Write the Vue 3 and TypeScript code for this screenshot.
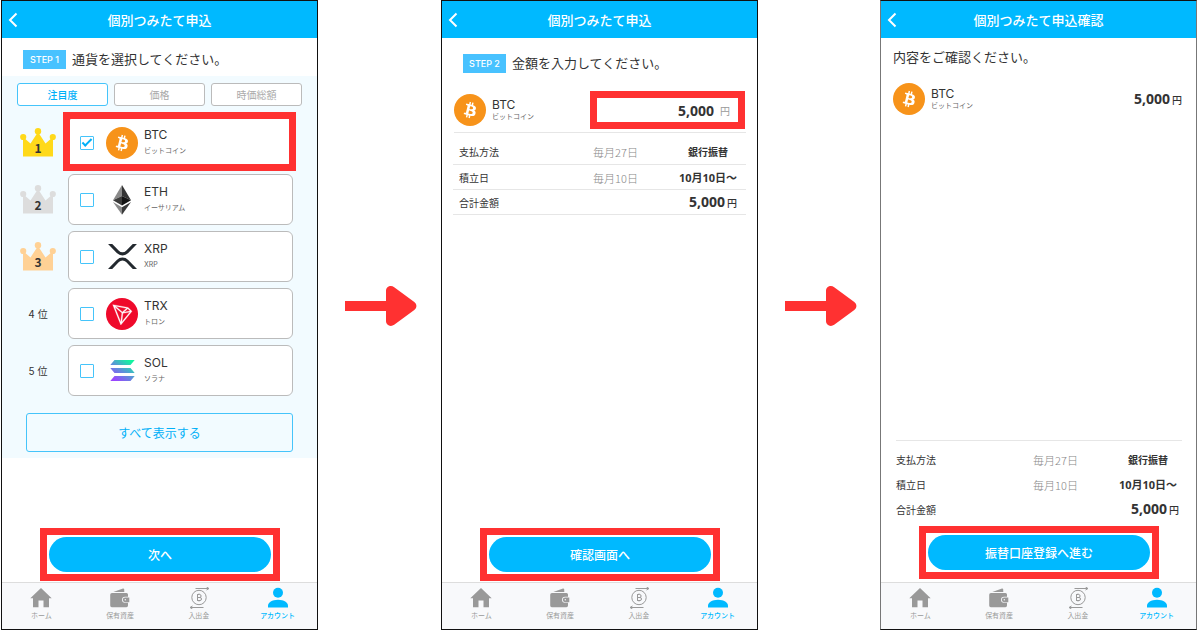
<script setup lang="ts">
import { ref } from 'vue'

interface Coin {
  id: string
  name: string
  rank: number
}

const coins: Coin[] = [
  { id: 'BTC', name: 'ビットコイン', rank: 1 },
  { id: 'ETH', name: 'イーサリアム', rank: 2 },
  { id: 'XRP', name: 'XRP', rank: 3 },
  { id: 'TRX', name: 'トロン', rank: 4 },
  { id: 'SOL', name: 'ソラナ', rank: 5 },
]

const tabs: string[] = ['注目度', '価格', '時価総額']
const activeTab = ref<string>('注目度')
const selected = ref<string[]>(['BTC'])
const amount = ref<string>('5,000')

type Step = 'select' | 'amount' | 'confirm'
interface Screen {
  step: Step
  title: string
  action: string
}

const screens: Screen[] = [
  { step: 'select', title: '個別つみたて申込', action: '次へ' },
  { step: 'amount', title: '個別つみたて申込', action: '確認画面へ' },
  { step: 'confirm', title: '個別つみたて申込確認', action: '振替口座登録へ進む' },
]

const navItems: { key: string; label: string }[] = [
  { key: 'home', label: 'ホーム' },
  { key: 'wallet', label: '保有資産' },
  { key: 'transfer', label: '入出金' },
  { key: 'account', label: 'アカウント' },
]

const bitcoinMark =
  'M23.189 14.02c.314-2.096-1.283-3.223-3.465-3.975l.708-2.84-1.728-.43-.69 2.765c-.454-.114-.92-.22-1.385-.326l.695-2.783L15.596 6l-.708 2.839c-.376-.086-.746-.17-1.104-.26l.002-.009-2.384-.595-.46 1.846s1.283.294 1.256.312c.7.175.826.638.805 1.006l-.806 3.235c.048.012.11.03.18.057l-.183-.045-1.13 4.532c-.086.212-.303.531-.793.41.018.025-1.256-.313-1.256-.313l-.858 1.978 2.25.561c.418.105.828.215 1.231.318l-.715 2.872 1.727.43.708-2.84c.472.127.93.245 1.378.357l-.706 2.828 1.728.43.715-2.866c2.948.558 5.164.333 6.097-2.333.752-2.146-.037-3.385-1.588-4.192 1.13-.26 1.98-1.003 2.207-2.538zm-3.95 5.538c-.533 2.147-4.148.986-5.32.695l.95-3.805c1.172.293 4.929.872 4.37 3.11zm.535-5.569c-.487 1.953-3.495.96-4.47.717l.86-3.45c.975.243 4.118.696 3.61 2.733z'
</script>

<template>
  <main class="flow">
    <template v-for="(screen, index) in screens" :key="screen.step">
      <div v-if="index > 0" class="arrow">
        <svg width="72" height="40" viewBox="0 0 72 40" aria-hidden="true">
          <path
            d="M0 15H41V5C41 .8 45.600 -1.300 49.200 1.200L69.300 16C72.100 18.200 72.100 21.800 69.300 24L49.200 38.800C45.600 41.300 41 39.200 41 35V25H0Z"
            fill="#ff3131"
          />
        </svg>
      </div>

      <section class="phone" :class="screen.step">
        <header class="bar">
          <button type="button" class="back" aria-label="戻る">
            <svg width="10" height="16" viewBox="0 0 10 16" aria-hidden="true">
              <path d="M8.500 1.500L2 8l6.500 6.500" fill="none" stroke="#fff" stroke-width="2" />
            </svg>
          </button>
          <h1>{{ screen.title }}</h1>
        </header>

        <template v-if="screen.step === 'select'">
          <p class="lead"><span class="badge">STEP 1</span>通貨を選択してください。</p>
          <div class="panel">
            <div class="tabs">
              <button
                v-for="tab in tabs"
                :key="tab"
                type="button"
                :class="{ active: tab === activeTab }"
                @click="activeTab = tab"
              >
                {{ tab }}
              </button>
            </div>
            <ul class="coins">
              <li v-for="coin in coins" :key="coin.id">
                <span v-if="coin.rank <= 3" class="crown" :class="'rank' + coin.rank">
                  <svg width="36" height="29" viewBox="0 0 36 29" aria-hidden="true">
                    <path d="M3 28.500V9L10.500 15.500 18 4l7.500 11.500L33 9V28.500Z" />
                    <circle cx="18" cy="3.300" r="3.200" />
                    <circle cx="3.200" cy="9" r="3.100" />
                    <circle cx="32.800" cy="9" r="3.100" />
                  </svg>
                  <b>{{ coin.rank }}</b>
                </span>
                <span v-else class="place">{{ coin.rank }} 位</span>
                <label class="card" :class="{ marked: coin.id === 'BTC' }">
                  <input v-model="selected" type="checkbox" :value="coin.id" />
                  <span class="logo">
                    <svg v-if="coin.id === 'BTC'" width="32" height="32" viewBox="0 0 32 32" aria-hidden="true">
                      <circle cx="16" cy="16" r="16" fill="#f7931a" />
                      <path :d="bitcoinMark" fill="#fff" transform="translate(2.900 2.900) scale(.82)" />
                    </svg>
                    <svg v-else-if="coin.id === 'ETH'" width="18" height="30" viewBox="0 0 18 30" aria-hidden="true">
                      <path d="M9 0L0 15.200 9 11.100Z" fill="#8a8a8a" />
                      <path d="M9 0V11.100L18 15.200Z" fill="#343434" />
                      <path d="M0 15.200L9 20.600V11.100Z" fill="#3c3c3b" />
                      <path d="M18 15.200L9 20.600V11.100Z" fill="#141414" />
                      <path d="M0 17L9 22.300V29.800Z" fill="#8a8a8a" />
                      <path d="M18 17L9 22.300V29.800Z" fill="#3a3a3a" />
                    </svg>
                    <svg
                      v-else-if="coin.id === 'XRP'"
                      width="29"
                      height="25"
                      viewBox="6 8 20 16.600"
                      preserveAspectRatio="none"
                      aria-hidden="true"
                    >
                      <path
                        fill="#23292f"
                        d="M23.070 8h2.890l-6.015 5.957a5.621 5.621 0 0 1-7.890 0L6.035 8H8.930l4.570 4.523a3.556 3.556 0 0 0 4.996 0L23.070 8zM8.895 24.563H6l6.055-5.993a5.621 5.621 0 0 1 7.890 0L26 24.563h-2.895L18.500 20a3.556 3.556 0 0 0-4.996 0l-4.610 4.563z"
                      />
                    </svg>
                    <svg v-else-if="coin.id === 'TRX'" width="32" height="32" viewBox="0 0 32 32" aria-hidden="true">
                      <circle cx="16" cy="16" r="16" fill="#ef0a2b" />
                      <path
                        fill="#fff"
                        stroke="#fff"
                        stroke-width=".3"
                        transform="translate(-1.200 -1) scale(1.060)"
                        d="M21.932 9.913L7.500 7.257l7.595 19.112 10.583-12.894-3.746-3.562zm-.232 1.170l2.208 2.099-6.038 1.093 3.830-3.192zm-5.142 2.973l-6.364-5.278 10.402 1.914-4.038 3.364zm-.453.934l-1.038 8.580L9.472 9.487l6.633 5.502zm.960.455l6.687-1.210-7.670 9.343.983-8.133z"
                      />
                    </svg>
                    <svg v-else width="25" height="21" viewBox="0 0 25 21" aria-hidden="true">
                      <defs>
                        <linearGradient id="solana" gradientUnits="userSpaceOnUse" x1="20" y1="1" x2="6" y2="21">
                          <stop offset="0" stop-color="#12f5a0" />
                          <stop offset=".5" stop-color="#5b93d8" />
                          <stop offset="1" stop-color="#9a45ff" />
                        </linearGradient>
                      </defs>
                      <path
                        fill="url(#solana)"
                        d="M4.500 0H24.700L20.500 5H.300ZM.300 8H20.500L24.700 13H4.500ZM4.500 16H24.700L20.500 21H.300Z"
                      />
                    </svg>
                  </span>
                  <span class="coin-name"><span>{{ coin.id }}</span><small>{{ coin.name }}</small></span>
                </label>
              </li>
            </ul>
            <button type="button" class="show-all">すべて表示する</button>
          </div>
        </template>

        <template v-else>
          <p v-if="screen.step === 'amount'" class="lead"><span class="badge">STEP 2</span>金額を入力してください。</p>
          <p v-else class="lead">内容をご確認ください。</p>
          <div class="holding">
            <svg width="32" height="32" viewBox="0 0 32 32" aria-hidden="true">
              <circle cx="16" cy="16" r="16" fill="#f7931a" />
              <path :d="bitcoinMark" fill="#fff" transform="translate(2.900 2.900) scale(.82)" />
            </svg>
            <span class="coin-name"><span>BTC</span><small>ビットコイン</small></span>
            <label v-if="screen.step === 'amount'" class="entry">
              <input v-model="amount" type="text" inputmode="numeric" aria-label="積立金額" />
              <span>円</span>
            </label>
            <span v-else class="money"><b>{{ amount }}</b>円</span>
          </div>
          <table class="summary">
            <tbody>
              <tr>
                <th scope="row">支払方法</th>
                <td class="when">毎月27日</td>
                <td class="value">銀行振替</td>
              </tr>
              <tr>
                <th scope="row">積立日</th>
                <td class="when">毎月10日</td>
                <td class="value date">10月10日～</td>
              </tr>
              <tr>
                <th scope="row">合計金額</th>
                <td class="total" colspan="2"><span class="money"><b>{{ amount }}</b>円</span></td>
              </tr>
            </tbody>
          </table>
        </template>

        <div class="action">
          <button type="button">{{ screen.action }}</button>
        </div>

        <nav class="nav">
          <a v-for="item in navItems" :key="item.key" href="#" :class="{ current: item.key === 'account' }">
            <svg width="22" height="22" viewBox="0 0 22 22" aria-hidden="true">
              <path
                v-if="item.key === 'home'"
                fill="currentColor"
                d="M11 1L21.700 11.300H19V20.300H13.500V13.500H8.500V20.300H3V11.300H.300Z"
              />
              <g v-else-if="item.key === 'wallet'" fill="currentColor">
                <path d="M4.300 4.900L14 1.600Q15 1.400 15.200 2.400L15.300 4.900Z" />
                <path
                  d="M3 6H17.500Q19 6 19 7.500V9.800H16A3 3 0 0 0 16 15.800H19V18.600Q19 20.300 17.400 20.300H2.800Q1.200 20.300 1.200 18.600V7.800Q1.200 6 3 6Z"
                />
                <path
                  fill-rule="evenodd"
                  d="M16.200 10.400H20.300V15.200H16.200A2.400 2.400 0 0 1 16.200 10.400ZM16.300 12.100A.7 .7 0 1 0 16.300 13.500A.7 .7 0 1 0 16.300 12.100Z"
                />
              </g>
              <g v-else-if="item.key === 'transfer'" fill="none" stroke="currentColor" stroke-width="1">
                <circle cx="11" cy="10.500" r="7.200" />
                <path d="M7.500 1.500H20.500M18.500 0L21 1.500 18.500 3M15.500 20.500H2.500M4.500 19L2 20.500 4.500 22" />
                <path d="M9.100 7.500H11.600A1.500 1.500 0 0 1 11.600 10.500H9.100M9.100 10.500H12A1.500 1.500 0 0 1 12 13.500H9.100M9.500 7.500V13.500M11 6.500V7.500M11 13.500V14.500" />
              </g>
              <g v-else fill="currentColor">
                <circle cx="11" cy="5.700" r="5" />
                <path d="M1 20.500V18.500C1 15.500 5 12.700 11 12.700S21 15.500 21 18.500V20.500Z" />
              </g>
            </svg>
            <span>{{ item.label }}</span>
          </a>
        </nav>
      </section>
    </template>
  </main>
</template>

<style>
body {
  margin: 0;
  background: #fff;
}
</style>

<style scoped>
.flow {
  box-sizing: border-box;
  display: grid;
  grid-template-columns: 317fr 123fr 317fr 122fr 317fr;
  min-height: 100vh;
  padding: 0 3px 0 1px;
  color: #333;
  font-family: Inter, 'Noto Sans CJK JP', sans-serif;
  font-size: 13px;
}
.flow *,
.flow *::before,
.flow *::after {
  box-sizing: border-box;
}
button,
input {
  margin: 0;
  padding: 0;
  border: 0;
  background: none;
  color: inherit;
  font: inherit;
}
button {
  cursor: pointer;
}
.arrow {
  display: flex;
  align-items: center;
  justify-content: center;
  padding: 0 0 18px 3px;
}
.phone {
  display: flex;
  flex-direction: column;
  min-width: 0;
  border: 1px solid #111;
}
.phone.confirm {
  border-left-color: #777;
  border-right-color: #777;
}
.bar {
  display: grid;
  grid-template-columns: 24px 1fr 24px;
  align-items: center;
  height: 37px;
  background: #00b9ff;
  color: #fff;
}
.bar h1 {
  margin: 0;
  font-size: 13px;
  font-weight: 500;
  line-height: 20px;
  text-align: center;
}
.back {
  display: flex;
  padding-left: 6px;
}
.lead {
  display: flex;
  align-items: center;
  gap: 6px;
  margin: 0;
  padding: 12px 0 7px 21px;
  line-height: 19px;
}
.amount .lead {
  padding-top: 16px;
}
.confirm .lead {
  padding: 10px 0 7px 12px;
}
.badge {
  width: 43px;
  background: #48c2ff;
  color: #fff;
  font-size: 9px;
  font-weight: 500;
  text-align: center;
}
.panel {
  padding: 7px 24px 6px;
  background: #f2fbff;
}
.tabs {
  display: grid;
  grid-template-columns: repeat(3, 1fr);
  gap: 6px;
  margin: 0 -9px;
}
.tabs button {
  height: 23px;
  border: 1px solid #bbb;
  border-radius: 3px;
  background: #fff;
  color: #aaa;
  font-size: 10px;
}
.tabs .active {
  border-color: #45c4fa;
  color: #00b0f8;
  font-weight: 500;
}
.coins {
  display: grid;
  gap: 6px;
  margin: 11px 0 17px;
  padding: 0;
  list-style: none;
}
.coins li {
  display: grid;
  grid-template-columns: 24px 1fr;
  column-gap: 18px;
  align-items: center;
}
.crown,
.place {
  display: grid;
  place-items: center;
  justify-content: center;
}
.place {
  font-size: 10px;
  white-space: nowrap;
}
.crown > * {
  grid-area: 1 / 1;
}
.crown b {
  padding-top: 10px;
  font-family: 'Noto Sans CJK JP', sans-serif;
  font-size: 12px;
  line-height: 14px;
}
.rank1 {
  fill: #ffd91a;
}
.rank2 {
  fill: #ddd;
}
.rank3 {
  fill: #ffd195;
}
.card {
  position: relative;
  display: flex;
  align-items: center;
  height: 51px;
  padding-left: 11px;
  border: 1px solid #bbb;
  border-radius: 6px;
  background: #fff;
}
.card.marked::after {
  position: absolute;
  inset: -6px -4px -4px -6px;
  border: 7px solid #ff3131;
  content: '';
  pointer-events: none;
}
.card input {
  width: 14px;
  height: 14px;
  border: 1px solid #45c4fa;
  border-radius: 1px;
  background: #fff;
  appearance: none;
}
.card input:checked {
  display: grid;
  place-items: center;
}
.card input:checked::before {
  width: 10px;
  height: 5px;
  margin-bottom: 3px;
  border: solid #00b0f8;
  border-width: 0 0 2px 2px;
  transform: rotate(-45deg);
  content: '';
}
.logo {
  display: grid;
  place-items: center;
  width: 32px;
  margin: 0 6px 0 12px;
}
.coin-name {
  display: grid;
  gap: 4px;
  font-size: 12px;
  line-height: 14px;
}
.card .coin-name {
  padding-bottom: 2px;
}
.coin-name small {
  color: #666;
  font-size: 7px;
  line-height: 10px;
}
.show-all {
  width: 100%;
  height: 39px;
  border: 1px solid #45c4fa;
  border-radius: 3px;
  color: #00b0f8;
  font-size: 12px;
}
.holding {
  display: flex;
  align-items: center;
  gap: 6px;
  margin: 0 11px 0 12px;
  padding: 14px 0 6px;
}
.holding .coin-name {
  flex: 1;
  gap: 0;
}
.amount .holding {
  border-bottom: 1px solid #e6e6e6;
}
.confirm .holding {
  padding-top: 9px;
}
.entry {
  display: flex;
  align-items: center;
  gap: 6px;
  width: 155px;
  height: 38px;
  margin: -3px 1px -3px 0;
  padding: 0 8px 0 12px;
  border: 7px solid #ff3131;
}
.entry input {
  flex: 1;
  min-width: 0;
  outline: 0;
  font-family: 'Open Sans', sans-serif;
  font-size: 14px;
  font-weight: 700;
  text-align: right;
}
.entry span {
  color: #999;
  font-size: 10px;
}
.money {
  display: inline-flex;
  align-items: baseline;
  gap: 2px;
  font-size: 10px;
  font-weight: 500;
}
.money b {
  font-family: 'Open Sans', sans-serif;
  font-size: 14px;
  line-height: 20px;
}
.confirm .holding .money {
  padding-right: 3px;
}
.summary {
  margin: 6px 11px 0;
  border-collapse: collapse;
  table-layout: fixed;
}
.summary tr {
  height: 25px;
}
.amount .summary tr {
  border-bottom: 1px solid #e6e6e6;
}
.summary th,
.summary td {
  padding: 2px 0 0;
  font-size: 10px;
  line-height: 20px;
}
.summary th {
  padding-left: 6px;
  font-weight: 400;
  text-align: left;
}
.summary .when {
  width: 109px;
  color: #888;
  font-family: 'Noto Sans CJK JP', sans-serif;
  font-size: 11px;
  font-weight: 300;
  text-align: center;
}
.summary .value {
  width: 76px;
  font-weight: 700;
  text-align: center;
}
.summary .date {
  font-family: 'Open Sans', 'Noto Sans CJK JP', sans-serif;
  font-size: 11px;
}
.summary .total {
  padding-right: 9px;
  text-align: right;
}
.confirm .summary {
  margin: auto 14px 0 15px;
  padding-top: 5px;
  border-top: 1px solid #e6e6e6;
  border-collapse: separate;
  border-spacing: 0;
}
.confirm .summary th {
  padding-left: 0;
}
.confirm .summary .when {
  width: 117px;
}
.confirm .summary .value {
  width: 68px;
}
.confirm .summary .total {
  padding-right: 3px;
}
.action {
  position: relative;
  margin: auto 46px 10px 47px;
}
.confirm .action {
  margin-top: 14px;
  margin-bottom: 12px;
}
.action::after {
  position: absolute;
  inset: -9px;
  border: 7px solid #ff3131;
  content: '';
  pointer-events: none;
}
.action button {
  display: block;
  width: 100%;
  height: 35px;
  border-radius: 18px;
  background: #00b9ff;
  color: #fff;
  font-size: 12px;
  font-weight: 500;
}
.nav {
  display: grid;
  grid-template-columns: repeat(4, 1fr);
  height: 47px;
  border-top: 1px solid #ddd;
  background: #f8f9fb;
}
.nav a {
  display: flex;
  flex-direction: column;
  align-items: center;
  padding-top: 4px;
  color: #999;
  font-size: 7px;
  line-height: 10px;
  text-decoration: none;
}
.nav span {
  padding-top: 2px;
}
.nav .current {
  color: #00b9ff;
  font-weight: 500;
}
</style>
